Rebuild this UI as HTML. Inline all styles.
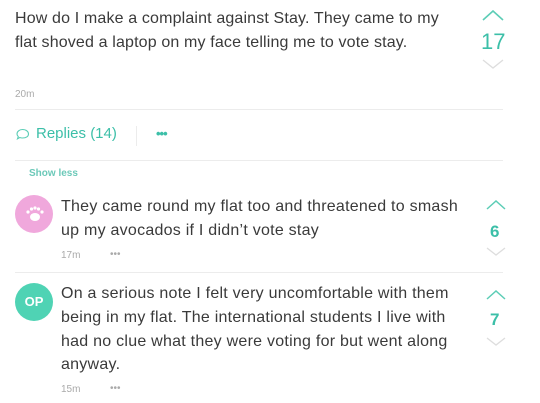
<!DOCTYPE html><html><head><style>
body{margin:0;width:540px;height:403px;background:#fff;font-family:"Liberation Sans",sans-serif;position:relative;overflow:hidden;color:#333}
.a{position:absolute;white-space:nowrap}
.t{font-size:16px;color:#3a3a3a;letter-spacing:0.15px}
.r{letter-spacing:0.25px}
.g{color:#aaa;font-size:10px}
.teal{color:#3cbfa8}
.hr{position:absolute;height:1px;background:#ececec}
</style></head><body>
<div class="a t" style="left:15px;top:10px">How do I make a complaint against Stay. They came to my</div>
<div class="a t" style="left:15px;top:34px">flat shoved a laptop on my face telling me to vote stay.</div>
<svg class="a" style="left:481px;top:10px" width="24" height="60"><polyline points="2,10 12,1 22,10" fill="none" stroke="#5ccdb6" stroke-width="1.6"/><polyline points="2,50 12,58 22,50" fill="none" stroke="#ddd" stroke-width="1.3"/></svg>
<div class="a teal" style="left:481px;top:29px;font-size:22px">17</div>
<div class="a g" style="left:15px;top:89px">20m</div>
<div class="hr" style="left:15px;top:109px;width:488px"></div>
<svg class="a" style="left:16px;top:128px" width="14" height="12"><path d="M6.5 1.5 C10 1.5 12.5 3.5 12.5 6 C12.5 8.5 10 10 6.5 10 C5.5 10 4.5 9.8 3.8 9.5 L1.5 10.8 L2.3 8.6 C1.5 7.8 1 7 1 6 C1 3.5 3.5 1.5 6.5 1.5Z" fill="none" stroke="#5ccdb6" stroke-width="1.1"/></svg>
<div class="a teal" style="left:36px;top:125px;font-size:15px">Replies (14)</div>
<div class="hr" style="left:136px;top:126px;width:1px;height:20px"></div>
<div class="a teal" style="left:156px;top:126px;font-size:13px;font-weight:bold;letter-spacing:-1px">•••</div>
<div class="hr" style="left:15px;top:160px;width:488px"></div>
<div class="a teal" style="left:29px;top:168px;font-size:10px;font-weight:bold;color:#6cc9b9">Show less</div>
<div class="a" style="left:15px;top:195px;width:38px;height:38px;border-radius:50%;background:#f0a8dc"></div>
<svg class="a" style="left:24px;top:204px" width="22" height="20"><ellipse cx="11" cy="13" rx="5" ry="4" fill="#fff"/><circle cx="4" cy="8" r="1.6" fill="#fff"/><circle cx="7.5" cy="5" r="1.6" fill="#fff"/><circle cx="11" cy="4" r="1.6" fill="#fff"/><circle cx="14.5" cy="5" r="1.6" fill="#fff"/><circle cx="18" cy="8" r="1.6" fill="#fff"/></svg>
<div class="a t r" style="left:61px;top:198px">They came round my flat too and threatened to smash</div>
<div class="a t r" style="left:61px;top:222px">up my avocados if I didn’t vote stay</div>
<svg class="a" style="left:485px;top:200px" width="22" height="60"><polyline points="2,9 11,1 20,9" fill="none" stroke="#5ccdb6" stroke-width="1.5"/><polyline points="2,48 11,55 20,48" fill="none" stroke="#ddd" stroke-width="1.3"/></svg>
<div class="a teal" style="left:490px;top:222px;font-size:17px;font-weight:bold">6</div>
<div class="a g" style="left:61px;top:250px">17m</div>
<div class="a g" style="left:110px;top:249px">•••</div>
<div class="hr" style="left:15px;top:272px;width:488px"></div>
<div class="a" style="left:15px;top:283px;width:38px;height:38px;border-radius:50%;background:#4fd3b4;color:#fff;font-size:13px;font-weight:bold;text-align:center;line-height:38px">OP</div>
<div class="a t r" style="left:61px;top:285px">On a serious note I felt very uncomfortable with them</div>
<div class="a t r" style="left:61px;top:309px">being in my flat. The international students I live with</div>
<div class="a t r" style="left:61px;top:333px">had no clue what they were voting for but went along</div>
<div class="a t r" style="left:61px;top:356px">anyway.</div>
<svg class="a" style="left:485px;top:290px" width="22" height="60"><polyline points="2,9 11,1 20,9" fill="none" stroke="#5ccdb6" stroke-width="1.5"/><polyline points="2,48 11,55 20,48" fill="none" stroke="#ddd" stroke-width="1.3"/></svg>
<div class="a teal" style="left:490px;top:310px;font-size:17px;font-weight:bold">7</div>
<div class="a g" style="left:61px;top:384px">15m</div>
<div class="a g" style="left:110px;top:383px">•••</div>
</body></html>
